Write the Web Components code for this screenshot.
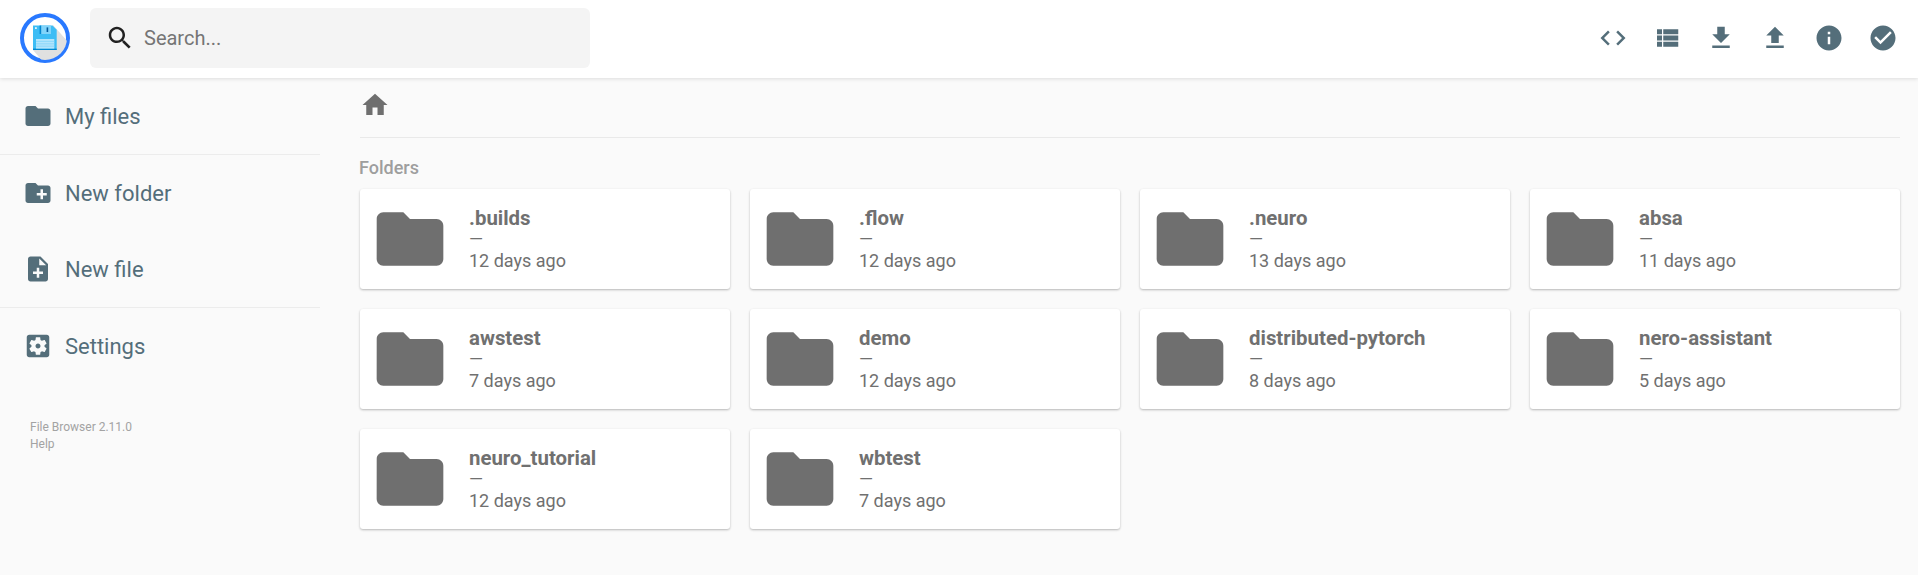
<!DOCTYPE html>
<html>
<head>
<meta charset="utf-8">
<title>File Browser</title>
<style>
    html, body { margin: 0; height: 100%; background: #fafafa; overflow: hidden; }
    body { font-family: Roboto, "Liberation Sans", sans-serif; color: #333; }
</style>
</head>
<body>
<file-browser>
    <app-header slot="top"></app-header>
    <side-bar slot="side"></side-bar>
    <folder-list slot="main">
        <folder-card name=".builds" age="12 days ago"></folder-card>
        <folder-card name=".flow" age="12 days ago"></folder-card>
        <folder-card name=".neuro" age="13 days ago"></folder-card>
        <folder-card name="absa" age="11 days ago"></folder-card>
        <folder-card name="awstest" age="7 days ago"></folder-card>
        <folder-card name="demo" age="12 days ago"></folder-card>
        <folder-card name="distributed-pytorch" age="8 days ago"></folder-card>
        <folder-card name="nero-assistant" age="5 days ago"></folder-card>
        <folder-card name="neuro_tutorial" age="12 days ago"></folder-card>
        <folder-card name="wbtest" age="7 days ago"></folder-card>
    </folder-list>
</file-browser>

<script>
// material icon paths
const ICONS = {
    folder: 'M10 4H4c-1.1 0-1.99.9-1.99 2L2 18c0 1.1.9 2 2 2h16c1.1 0 2-.9 2-2V8c0-1.1-.9-2-2-2h-8l-2-2z',
    newFolder: 'M20 6h-8l-2-2H4c-1.11 0-1.99.89-1.99 2L2 18c0 1.11.89 2 2 2h16c1.11 0 2-.89 2-2V8c0-1.11-.89-2-2-2zm-1 8h-3v3h-2v-3h-3v-2h3V9h2v3h3v2z',
    newFile: 'M14 2H6c-1.1 0-1.99.9-1.99 2L4 20c0 1.1.89 2 1.99 2H18c1.1 0 2-.9 2-2V8l-6-6zm2 14h-3v3h-2v-3H8v-2h3v-3h2v3h3v2zm-3-7V3.5L18.5 9H13z',
    settings: 'M12 10c-1.1 0-2 .9-2 2s.9 2 2 2 2-.9 2-2-.9-2-2-2zm7-7H5c-1.11 0-2 .9-2 2v14c0 1.1.89 2 2 2h14c1.11 0 2-.9 2-2V5c0-1.1-.89-2-2-2zm-1.75 9c0 .23-.02.46-.05.68l1.48 1.16c.13.11.17.3.08.45l-1.4 2.42c-.09.15-.27.21-.43.15l-1.74-.7c-.36.28-.76.51-1.18.69l-.26 1.85c-.03.17-.18.3-.35.3h-2.8c-.17 0-.32-.13-.35-.29l-.26-1.85c-.43-.18-.82-.41-1.18-.69l-1.74.7c-.16.06-.34 0-.43-.15l-1.4-2.42c-.09-.15-.05-.34.08-.45l1.48-1.16c-.03-.23-.05-.46-.05-.69 0-.23.02-.46.05-.68l-1.48-1.16c-.13-.11-.17-.3-.08-.45l1.4-2.42c.09-.15.27-.21.43-.15l1.74.7c.36-.28.76-.51 1.18-.69l.26-1.85c.03-.17.18-.3.35-.3h2.8c.17 0 .32.13.35.29l.26 1.85c.43.18.82.41 1.18.69l1.74-.7c.16-.06.34 0 .43.15l1.4 2.42c.09.15.05.34-.08.45l-1.48 1.16c.03.23.05.46.05.69z',
    search: 'M15.5 14h-.79l-.28-.27C15.41 12.59 16 11.11 16 9.5 16 5.91 13.09 3 9.5 3S3 5.91 3 9.5 5.91 16 9.5 16c1.61 0 3.09-.59 4.23-1.57l.27.28v.79l5 4.99L20.49 19l-4.99-5zm-6 0C7.01 14 5 11.99 5 9.5S7.01 5 9.5 5 14 7.01 14 9.5 11.99 14 9.5 14z',
    home: 'M10 20v-6h4v6h5v-8h3L12 3 2 12h3v8z',
    code: 'M9.4 16.6L4.8 12l4.6-4.6L8 6l-6 6 6 6 1.4-1.4zm5.2 0l4.6-4.6-4.6-4.6L16 6l6 6-6 6-1.4-1.4z',
    list: 'M4 14h4v-4H4v4zm0 5h4v-4H4v4zM4 9h4V5H4v4zm5 5h12v-4H9v4zm0 5h12v-4H9v4zM9 5v4h12V5H9z',
    download: 'M19 9h-4V3H9v6H5l7 7 7-7zM5 18v2h14v-2H5z',
    upload: 'M9 16h6v-6h4l-7-7-7 7h4v6zm-4 2h14v2H5v-2z',
    info: 'M12 2C6.48 2 2 6.48 2 12s4.48 10 10 10 10-4.48 10-10S17.52 2 12 2zm1 15h-2v-6h2v6zm0-8h-2V7h2v2z',
    check: 'M12 2C6.48 2 2 6.48 2 12s4.48 10 10 10 10-4.48 10-10S17.52 2 12 2zm-2 15l-5-5 1.41-1.41L10 14.17l7.59-7.59L19 8l-9 9z'
};

class MatIcon extends HTMLElement {
    connectedCallback() {
        const size = this.getAttribute('size') || 24;
        this.attachShadow({ mode: 'open' });
        this.shadowRoot.innerHTML = `
            <style>
                :host { display: block; width: ${size}px; height: ${size}px; flex: none; }
                svg { display: block; width: 100%; height: 100%; fill: currentColor; }
            </style>
            <svg viewBox="0 0 24 24"><path d="${ICONS[this.getAttribute('name')]}"/></svg>
        `;
    }
}
customElements.define('mat-icon', MatIcon);

class AppLogo extends HTMLElement {
    constructor() {
        super();
        this.attachShadow({ mode: 'open' });
        this.shadowRoot.innerHTML = `
            <style>
                :host { display: block; width: 50px; height: 50px; flex: none; }
                svg { display: block; }
            </style>
            <svg width="50" height="50" viewBox="0 0 50 50">
                <defs><clipPath id="c"><circle cx="25" cy="25" r="22"/></clipPath></defs>
                <circle cx="25" cy="25" r="23" fill="#fff" stroke="#2979ff" stroke-width="4"/>
                <path d="M33 12 L48 29 V50 H24 L13 37 Z" fill="#e0e0e0" clip-path="url(#c)"/>
                <path d="M13 12.5 H32.5 L36.7 16.7 V37 H13 Z" fill="#3dbdf5"/>
                <path d="M13 35.6 H36.7 V37 H13 Z" fill="#0288d1"/>
                <rect x="21" y="12.5" width="10" height="8.5" fill="#81d4fa"/>
                <rect x="19.6" y="12.5" width="1.6" height="8.5" fill="#0288d1"/>
                <rect x="26.6" y="14.4" width="1.6" height="4.6" fill="#01579b"/>
                <rect x="15" y="14.2" width="1.8" height="1.8" fill="#e1f5fe"/>
                <rect x="16" y="26" width="18.3" height="9.6" fill="#b3e5fc"/>
                <path d="M16 28.4h18.3M16 30.8h18.3M16 33.2h18.3" stroke="#81d4fa" stroke-width=".8"/>
            </svg>
        `;
    }
}
customElements.define('app-logo', AppLogo);

class SearchBox extends HTMLElement {
    constructor() {
        super();
        this.attachShadow({ mode: 'open' });
        this.shadowRoot.innerHTML = `
            <style>
                :host {
                    display: flex;
                    align-items: center;
                    gap: 9px;
                    width: 500px;
                    height: 60px;
                    box-sizing: border-box;
                    padding-left: 15px;
                    background: #f4f4f4;
                    border-radius: 6px;
                    color: #212121;
                }
                span { font-size: 20px; color: #757575; }
            </style>
            <mat-icon name="search" size="30"></mat-icon>
            <span>Search...</span>
        `;
    }
}
customElements.define('search-box', SearchBox);

class AppHeader extends HTMLElement {
    constructor() {
        super();
        this.attachShadow({ mode: 'open' });
        const names = ['code', 'list', 'download', 'upload', 'info', 'check'];
        this.shadowRoot.innerHTML = `
            <style>
                :host {
                    display: flex;
                    align-items: center;
                    height: 78px;
                    box-sizing: border-box;
                    padding: 0 20px 2px;
                    background: #fff;
                    box-shadow: 0 1px 4px rgba(0,0,0,.12);
                    position: relative;
                    z-index: 2;
                }
                search-box { margin-left: 20px; }
                .actions { display: flex; margin-left: auto; margin-right: -12px; color: #546e7a; }
                .actions mat-icon { margin: 0 12px; }
            </style>
            <app-logo></app-logo>
            <search-box></search-box>
            <div class="actions">
                ${names.map(n => `<mat-icon name="${n}" size="30"></mat-icon>`).join('')}
            </div>
        `;
    }
}
customElements.define('app-header', AppHeader);

class SideAction extends HTMLElement {
    constructor() {
        super();
        this.attachShadow({ mode: 'open' });
    }
    connectedCallback() {
        this.shadowRoot.innerHTML = `
            <style>
                :host {
                    display: flex;
                    align-items: center;
                    gap: 12px;
                    height: 76px;
                    padding-left: 23px;
                    font-size: 22px;
                    color: #546e7a;
                }
            </style>
            <mat-icon name="${this.getAttribute('icon')}" size="30"></mat-icon>
            <slot></slot>
        `;
    }
}
customElements.define('side-action', SideAction);

class SideBar extends HTMLElement {
    constructor() {
        super();
        this.attachShadow({ mode: 'open' });
        this.shadowRoot.innerHTML = `
            <style>
                :host { display: block; width: 320px; flex: none; }
                .group { border-bottom: 1px solid #ececec; }
                .group:last-of-type { border-bottom: 0; }
                p { margin: 0; padding: 35px 0 0 30px; font-size: 12px; line-height: 17px; color: #a3a3a3; }
            </style>
            <div class="group"><side-action icon="folder">My files</side-action></div>
            <div class="group">
                <side-action icon="newFolder">New folder</side-action>
                <side-action icon="newFile">New file</side-action>
            </div>
            <div class="group"><side-action icon="settings">Settings</side-action></div>
            <p>File Browser 2.11.0<br>Help</p>
        `;
    }
}
customElements.define('side-bar', SideBar);

class FolderCard extends HTMLElement {
    connectedCallback() {
        this.attachShadow({ mode: 'open' });
        this.shadowRoot.innerHTML = `
            <style>
                :host {
                    display: flex;
                    align-items: center;
                    height: 100px;
                    background: #fff;
                    border-radius: 3px;
                    box-shadow: 0 1px 3px rgba(0,0,0,.12), 0 1px 2px rgba(0,0,0,.16);
                    color: #707070;
                }
                mat-icon { margin-left: 10px; color: #6f6f6f; }
                .text { margin-left: 19px; }
                .name { font-size: 20.4px; font-weight: 700; line-height: 22px; }
                .size { font-size: 18px; line-height: 20px; height: 21px; }
                .age { font-size: 18px; line-height: 22px; }
            </style>
            <mat-icon name="folder" size="80"></mat-icon>
            <div class="text">
                <div class="name">${this.getAttribute('name')}</div>
                <div class="size">—</div>
                <div class="age">${this.getAttribute('age')}</div>
            </div>
        `;
    }
}
customElements.define('folder-card', FolderCard);

class FolderList extends HTMLElement {
    constructor() {
        super();
        this.attachShadow({ mode: 'open' });
        this.shadowRoot.innerHTML = `
            <style>
                :host { display: block; flex: 1; min-width: 0; padding: 0 18px 0 40px; }
                .crumbs { display: flex; align-items: center; height: 53px; padding: 0 0 6px; border-bottom: 1px solid #e9e9e9; color: #6f6f6f; }
                h2 { margin: 0 0 0 -1px; padding-top: 20px; font-size: 18px; font-weight: 500; line-height: 20px; color: #9e9e9e; }
                .grid { display: grid; grid-template-columns: repeat(4, 1fr); gap: 20px; margin-top: 11px; }
            </style>
            <div class="crumbs"><mat-icon name="home" size="30"></mat-icon></div>
            <h2>Folders</h2>
            <div class="grid"><slot></slot></div>
        `;
    }
}
customElements.define('folder-list', FolderList);

class FileBrowser extends HTMLElement {
    constructor() {
        super();
        this.attachShadow({ mode: 'open' });
        this.shadowRoot.innerHTML = `
            <style>
                :host { display: flex; flex-direction: column; height: 100vh; }
                .body { display: flex; flex: 1; min-height: 0; }
            </style>
            <slot name="top"></slot>
            <div class="body">
                <slot name="side"></slot>
                <slot name="main"></slot>
            </div>
        `;
    }
}
customElements.define('file-browser', FileBrowser);
</script>
</body>
</html>
